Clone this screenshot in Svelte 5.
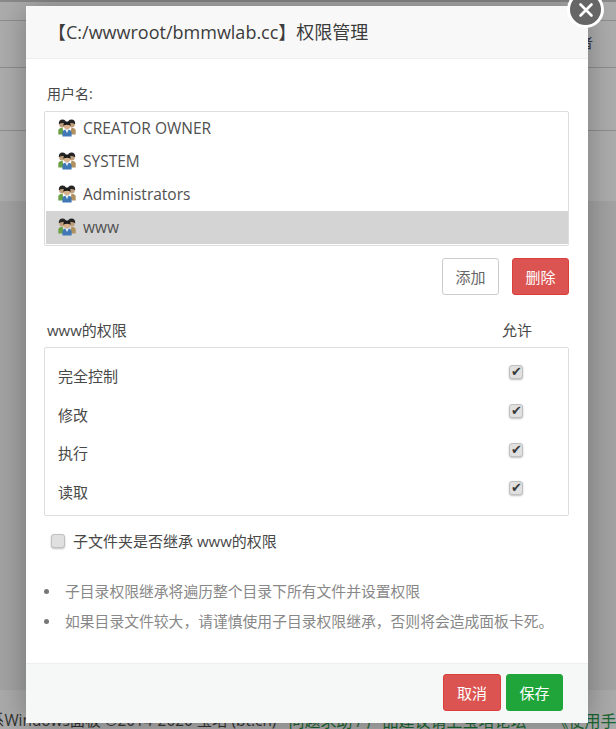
<script>
  const users = ["CREATOR OWNER", "SYSTEM", "Administrators", "www"];
  const perms = ["完全控制", "修改", "执行", "读取"];
  const notes = [
    "子目录权限继承将遍历整个目录下所有文件并设置权限",
    "如果目录文件较大，请谨慎使用子目录权限继承，否则将会造成面板卡死。",
  ];
  let selected = $state("www");
</script>

{#snippet userIcon()}
  <svg class="user-icon" viewBox="0 0 18 18" width="18" height="18">
    <circle cx="4.2" cy="5.4" r="3" fill="#c0a07c" />
    <circle cx="13.8" cy="5.4" r="3" fill="#c0a07c" />
    <path d="M0.8 5.2 Q0.6 0.6 4.5 0.6 Q8 0.6 8.4 4.4 L5 4 Q3 4 0.8 5.2 Z" fill="#262626" />
    <path d="M17.2 5.2 Q17.4 0.6 13.5 0.6 Q10 0.6 9.6 4.4 L13 4 Q15 4 17.2 5.2 Z" fill="#262626" />
    <path d="M0.3 15.5 V11.5 Q0.8 8.8 4.5 8.8 L6 15.5 Z" fill="#6aa046" />
    <path d="M17.7 15.5 V11.5 Q17.2 8.8 13.5 8.8 L12 15.5 Z" fill="#b0915f" />
    <circle cx="9" cy="7" r="3.2" fill="#d8b08a" />
    <path d="M5.3 6.8 Q5.4 2.2 9 2.4 Q12.6 2.2 12.7 6.8 Q9 4.8 5.3 6.8 Z" fill="#1a1a1a" />
    <path d="M4.4 17.5 V13.8 Q4.6 10.4 9 10.4 Q13.4 10.4 13.6 13.8 V17.5 Z" fill="#3f78b5" />
    <path d="M7.2 10.4 L9 14 L10.8 10.4 Z" fill="#eef1f4" />
  </svg>
{/snippet}

<div class="page">
  <div class="bg-row first"></div>
  <div class="bg-row second">
    <span class="bg-tail">者</span>
  </div>
  <div class="bg-row third"></div>
  <div class="bg-row fourth"></div>
  <div class="bg-main"></div>
  <div class="bg-footer">
    <span class="foot-a">系Windows面板 ©2014-2020 宝塔 (bt.cn)</span>
    <span class="foot-b">问题求助 / 产品建议请上宝塔论坛</span>
    <span class="foot-c">《使用手册》</span>
  </div>

  <div class="modal">
    <button class="close" aria-label="关闭">
      <svg viewBox="0 0 16 16" width="16" height="16">
        <path d="M2.5 2.5 L13.5 13.5 M13.5 2.5 L2.5 13.5" stroke="#fff" stroke-width="2.6" stroke-linecap="round" />
      </svg>
    </button>

    <header class="modal-head">【C:/wwwroot/bmmwlab.cc】权限管理</header>

    <div class="modal-body">
      <div class="user-label">用户名:</div>
      <ul class="users">
        {#each users as u}
          <li class:active={selected === u}>
            <button class="user" onclick={() => (selected = u)}>
              {@render userIcon()}
              <span>{u}</span>
            </button>
          </li>
        {/each}
      </ul>

      <div class="user-actions">
        <button class="btn btn-plain">添加</button>
        <button class="btn btn-red">删除</button>
      </div>

      <div class="perm-head">
        <span>{selected}的权限</span>
        <span>允许</span>
      </div>
      <div class="perms">
        {#each perms as p}
          <label class="perm">
            <span>{p}</span>
            <input type="checkbox" checked />
          </label>
        {/each}
      </div>

      <label class="inherit">
        <input type="checkbox" />
        <span>子文件夹是否继承 {selected}的权限</span>
      </label>

      <ul class="notes">
        {#each notes as n}
          <li>{n}</li>
        {/each}
      </ul>
    </div>

    <footer class="modal-foot">
      <button class="btn btn-red cancel">取消</button>
      <button class="btn btn-green">保存</button>
    </footer>
  </div>
</div>

<style>
  :global(body) {
    margin: 0;
    background: #a3a3a3;
  }

  .page {
    position: relative;
    width: 616px;
    height: 729px;
    overflow: hidden;
    display: flex;
    flex-direction: column;
    font-family: "Open Sans", "Noto Sans CJK SC", sans-serif;
    font-size: 15px;
    color: #484848;
    background: #a3a3a3;
  }

  .bg-row {
    box-sizing: border-box;
    flex: none;
    border-bottom: 1px solid #8e8e8e;
    background: #adadad;
  }
  .first { height: 21px; border-top: 2px solid #8a8a8a; }
  .second { height: 47px; }
  .third { height: 63px; }
  .fourth { height: 70px; border: 0; }
  .bg-tail {
    display: block;
    margin: 14px 0 0 579px;
    font-size: 14px;
    line-height: 16px;
    color: #33334d;
  }
  .bg-main {
    flex: 1;
    background: #a3a3a3;
  }
  .bg-footer {
    flex: none;
    height: 39px;
    box-sizing: border-box;
    background: #ababab;
    display: flex;
    padding-top: 21px;
    margin-left: -11px;
    white-space: nowrap;
    font-size: 16px;
    line-height: 20px;
    color: #333;
  }
  .foot-a { flex: none; font-size: 15.4px; }
  .foot-b { flex: none; margin-left: 12px; color: #1a6430; }
  .foot-c { flex: none; margin-left: 26px; color: #1a6430; }

  .modal {
    position: absolute;
    left: 26px;
    top: 6px;
    width: 562px;
    height: 717px;
    background: #fff;
    display: flex;
    flex-direction: column;
    box-sizing: border-box;
    box-shadow: 0 0 30px rgba(0, 0, 0, 0.3);
  }

  .close {
    position: absolute;
    right: -16px;
    top: -15px;
    width: 37px;
    height: 37px;
    padding: 0;
    box-sizing: border-box;
    border: 3px solid #fff;
    border-radius: 50%;
    background: #666;
    display: flex;
    align-items: center;
    justify-content: center;
  }

  .modal-head {
    flex: none;
    box-sizing: border-box;
    height: 53px;
    line-height: 52px;
    padding-left: 22px;
    font-size: 18px;
    color: #3c3c3c;
    background: #f8f8f8;
    border-bottom: 1px solid #eee;
  }

  .modal-body {
    flex: 1;
    padding: 25px 19px 0 18px;
  }

  .user-label {
    padding-left: 3px;
    line-height: 20px;
    font-size: 14px;
  }

  .users {
    list-style: none;
    margin: 7px 0 0;
    padding: 0 0 1px 1px;
    border: 1px solid #ddd;
    border-radius: 2px;
  }
  .users li.active { background: #d4d4d4; }
  .user {
    display: flex;
    align-items: center;
    gap: 7px;
    width: 100%;
    height: 33px;
    padding: 0 0 2px 12px;
    border: 0;
    background: none;
    font: inherit;
    font-size: 15.5px;
    color: #505050;
    text-align: left;
  }
  .user-icon { flex: none; }

  .user-actions {
    display: flex;
    justify-content: flex-end;
    gap: 13px;
    margin-top: 12px;
  }

  .btn {
    box-sizing: border-box;
    width: 57px;
    height: 37px;
    padding: 0;
    border-radius: 3px;
    font: inherit;
  }
  .btn-plain {
    background: #fff;
    border: 1px solid #ccc;
    color: #666;
  }
  .btn-red {
    background: #db5451;
    border: 1px solid #d9403c;
    color: #fff;
  }
  .btn-green {
    background: #20a53a;
    border: 1px solid #20a53a;
    color: #fff;
  }
  .cancel { width: 58px; }

  .perm-head {
    display: flex;
    justify-content: space-between;
    margin-top: 25px;
    padding: 0 37px 0 3px;
    line-height: 20px;
  }

  .perms {
    margin-top: 7px;
    padding: 8px 13px 4px;
    border: 1px solid #ddd;
    border-radius: 2px;
  }
  .perm {
    height: 38.7px;
    display: flex;
    align-items: center;
    justify-content: space-between;
    padding-right: 32px;
  }

  input[type="checkbox"] {
    appearance: none;
    width: 14px;
    height: 14px;
    margin: 0;
    box-sizing: border-box;
    border: 1px solid #c0c0c0;
    border-radius: 3px;
    background: #e0e0e0;
    box-shadow: 0 1px 2px rgba(0, 0, 0, 0.25);
    display: flex;
    align-items: center;
    justify-content: center;
  }
  input[type="checkbox"]:checked::before {
    content: "✔";
    font-size: 13px;
    line-height: 12px;
    color: #3a3a3a;
  }
  .perm input[type="checkbox"] { margin-top: -6px; }

  .inherit {
    display: flex;
    align-items: center;
    gap: 8px;
    margin-top: 15px;
    padding-left: 7px;
    line-height: 20px;
  }

  .notes {
    margin: 30px 0 0;
    padding: 0 0 0 21px;
    list-style: none;
    color: #888;
    font-size: 14.8px;
  }
  .notes li {
    position: relative;
    height: 30px;
    line-height: 20px;
  }
  .notes li::before {
    content: "";
    position: absolute;
    left: -21px;
    top: 8px;
    width: 5px;
    height: 5px;
    border-radius: 50%;
    background: #777;
  }

  .modal-foot {
    flex: none;
    box-sizing: border-box;
    height: 60px;
    border-top: 1px solid #eee;
    background: #f6f8f8;
    display: flex;
    justify-content: flex-end;
    gap: 5px;
    padding: 10px 25px 0 0;
  }
</style>
